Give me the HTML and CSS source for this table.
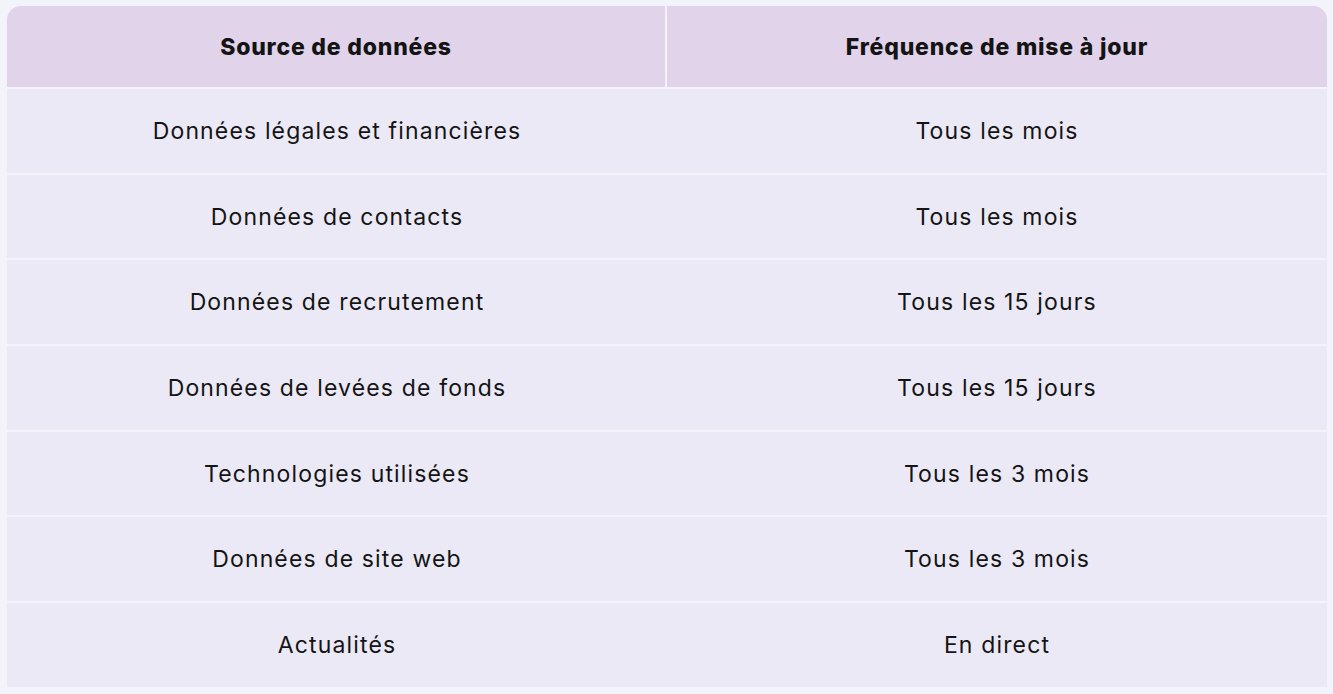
FILE: index.html
```html
<!DOCTYPE html>
<html lang="fr">
<head>
<meta charset="utf-8">
<title>Fréquence de mise à jour</title>
<link rel="stylesheet" href="styles.css">
</head>
<body>
<table class="freq">
  <thead>
    <tr><th>Source de données</th><th>Fréquence de mise à jour</th></tr>
  </thead>
  <tbody>
    <tr><td>Données légales et financières</td><td>Tous les mois</td></tr>
    <tr><td>Données de contacts</td><td>Tous les mois</td></tr>
    <tr><td>Données de recrutement</td><td>Tous les 15 jours</td></tr>
    <tr><td>Données de levées de fonds</td><td>Tous les 15 jours</td></tr>
    <tr><td>Technologies utilisées</td><td>Tous les 3 mois</td></tr>
    <tr><td>Données de site web</td><td>Tous les 3 mois</td></tr>
    <tr><td>Actualités</td><td>En direct</td></tr>
  </tbody>
</table>
</body>
</html>
```
FILE: styles.css
```css
html, body {
  margin: 0;
  padding: 0;
  background: #f3f4fb;
}
body {
  padding: 6px 6px 8px 7px;
  font-family: Inter, "Noto Sans", sans-serif;
  color: #141414;
}
.freq {
  width: 1320px;
  border-collapse: separate;
  border-spacing: 0;
  table-layout: fixed;
}
.freq th, .freq td {
  text-align: center;
  font-size: 23px;
  letter-spacing: 1.15px;
  padding: 0;
}
.freq th {
  height: 81px;
  background: #e0d3ea;
  font-weight: 800;
  letter-spacing: 0.8px;
  border-bottom: 2px solid #f5f2fb;
}
.freq th:first-child {
  border-top-left-radius: 14px;
  border-right: 2px solid #f5f2fb;
}
.freq th:last-child {
  border-top-right-radius: 14px;
}
.freq td {
  height: 83.7px;
  background: #ebe9f5;
  font-weight: 400;
  border-bottom: 2px solid #f5f2fb;
}
.freq tbody tr:last-child td {
  border-bottom: none;
}
```
